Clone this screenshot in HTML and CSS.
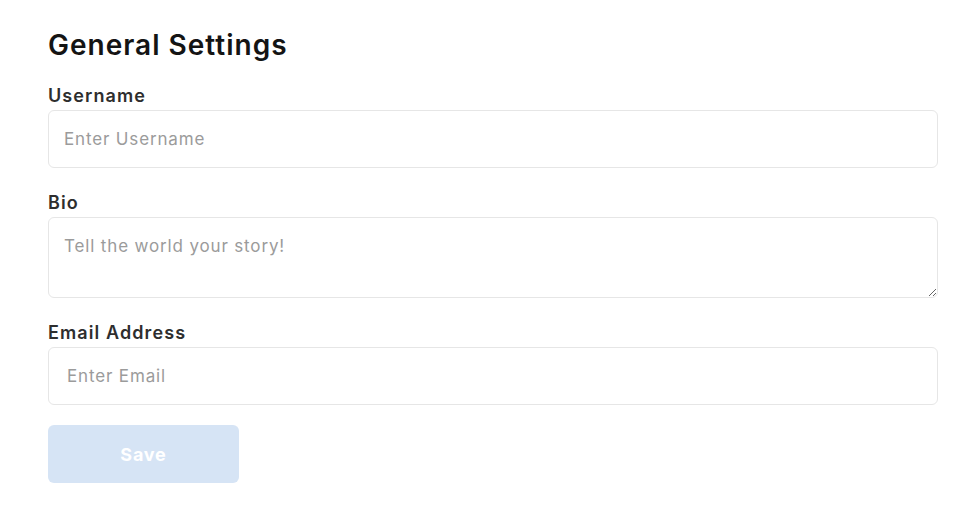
FILE: index.html
```html
<!DOCTYPE html>
<html lang="en">
<head>
<meta charset="utf-8">
<title>General Settings</title>
<link rel="stylesheet" href="styles.css">
</head>
<body>
<main class="settings">
  <h1 class="title">General Settings</h1>
  <div class="field">
    <label class="label" for="username">Username</label>
    <input class="input" id="username" type="text" placeholder="Enter Username">
  </div>
  <div class="field">
    <label class="label" for="bio">Bio</label>
    <textarea class="input textarea" id="bio" placeholder="Tell the world your story!"></textarea>
  </div>
  <div class="field">
    <label class="label" for="email">Email Address</label>
    <input class="input input-email" id="email" type="email" placeholder="Enter Email">
  </div>
  <button class="save" type="button" disabled>Save</button>
</main>
</body>
</html>
```
FILE: styles.css
```css
* { box-sizing: border-box; }
html, body { margin: 0; background: #ffffff; }
body {
  font-family: "Inter", "Noto Sans", sans-serif;
  color: #2d2d2d;
}
.settings {
  display: flex;
  flex-direction: column;
  padding: 27px 26px 0 48px;
}
.title {
  margin: 0 0 19px;
  font-size: 28px;
  line-height: 36px;
  font-weight: 600;
  letter-spacing: 1px;
  color: #141414;
}
.field {
  display: flex;
  flex-direction: column;
  gap: 2px;
  margin-bottom: 21px;
}
.label {
  padding-top: 2px;
  font-size: 18px;
  line-height: 24px;
  font-weight: 600;
  letter-spacing: 1.1px;
  color: #2e2e2e;
}
.input {
  width: 100%;
  height: 58px;
  padding: 0 15px;
  border: 1px solid #e6e6e6;
  border-radius: 6px;
  font-family: inherit;
  font-size: 17px;
  letter-spacing: 0.85px;
  color: #333;
  background: #fff;
  outline: none;
}
.input-email { padding-left: 18px; }
.textarea {
  height: 81px;
  padding: 16px 15px;
  line-height: 24px;
  resize: vertical;
  display: block;
}
.input::placeholder { color: #9b9b9b; }
.save {
  margin-top: -1px;
  width: 191px;
  height: 58px;
  border: none;
  border-radius: 6px;
  background: #d6e4f5;
  color: #ffffff;
  font-family: inherit;
  font-size: 18px;
  font-weight: 700;
  letter-spacing: 0.8px;
}
```
